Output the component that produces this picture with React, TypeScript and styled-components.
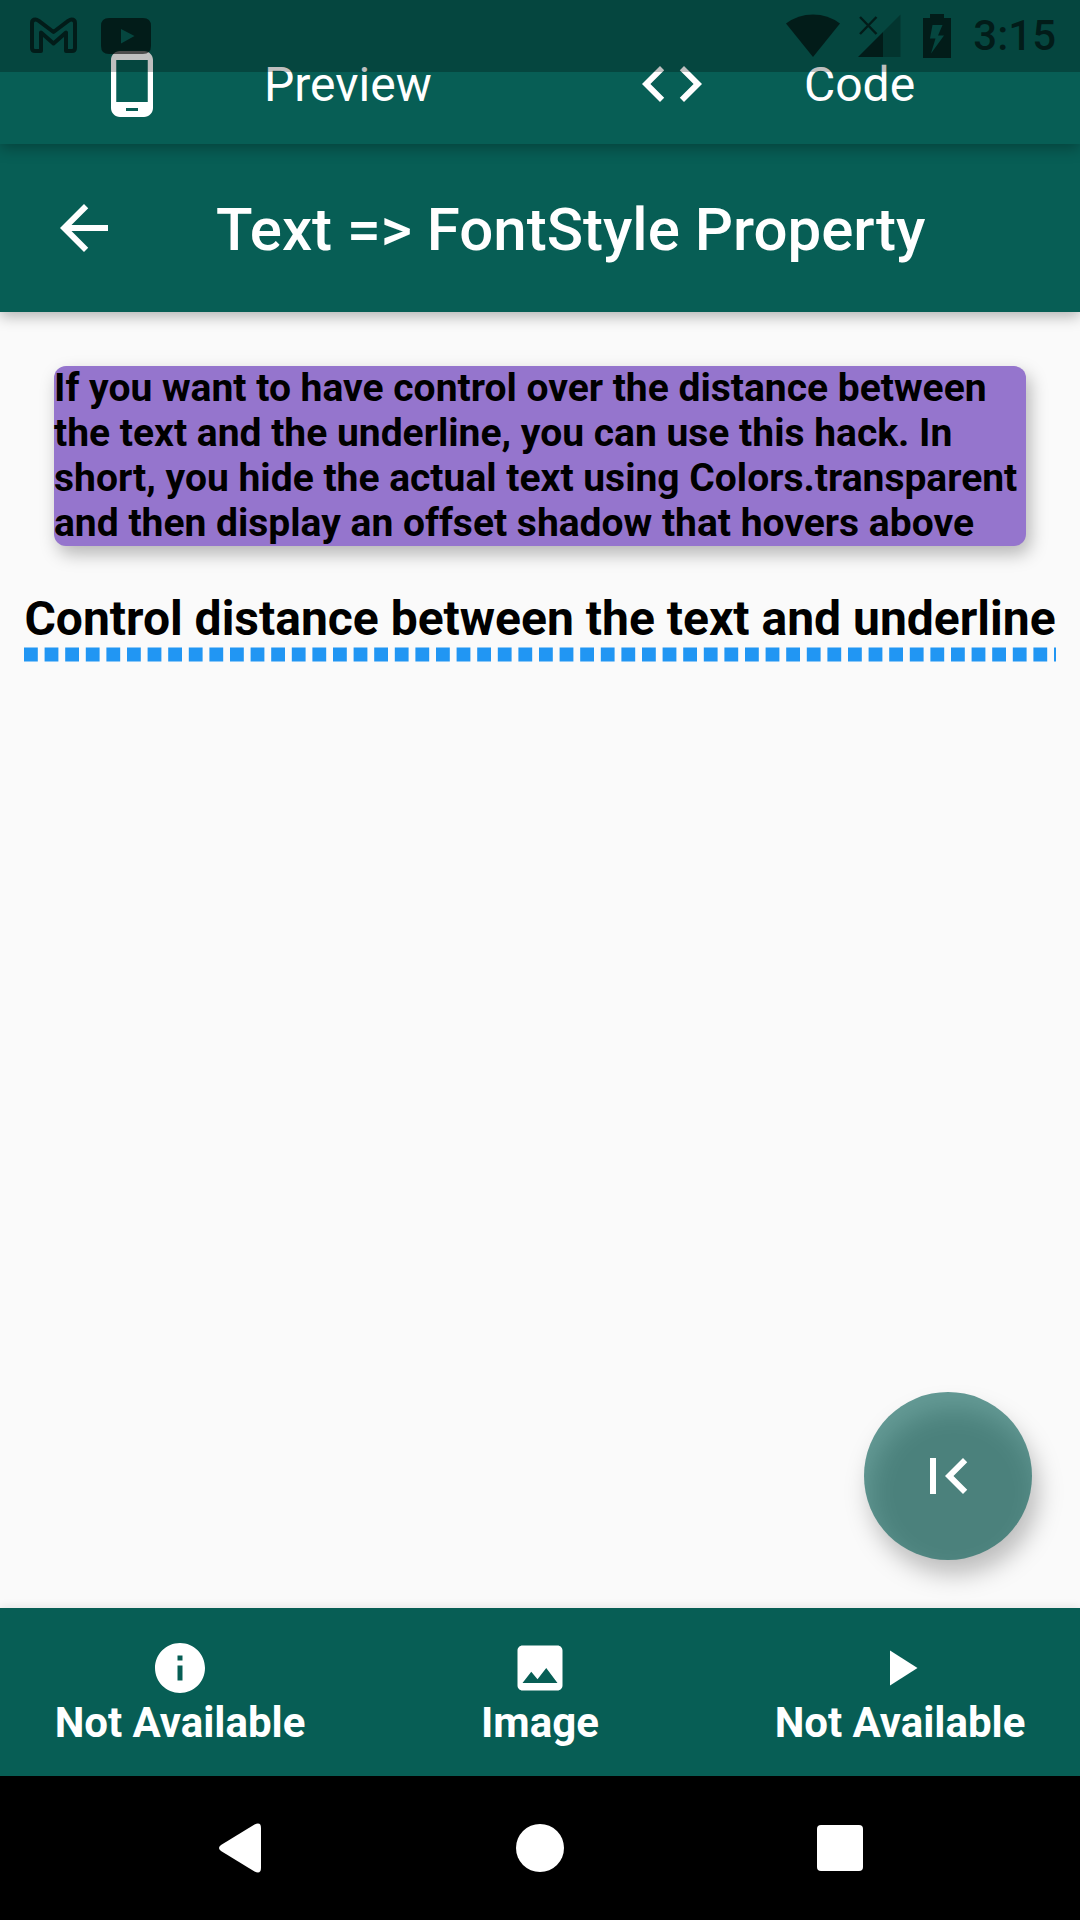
import React from "react";
import styled, { createGlobalStyle } from "styled-components";

const teal = "#075e55";
const ink = "rgba(0, 0, 0, 0.6)";

const GlobalStyle = createGlobalStyle`
  *, *::before, *::after { box-sizing: border-box; }
  body {
    margin: 0;
    background: #fafafa;
    font-family: Roboto, "Noto Sans", sans-serif;
  }
  button {
    margin: 0;
    padding: 0;
    border: 0;
    background: none;
    color: inherit;
    font: inherit;
    cursor: pointer;
  }
  h1, h2, p { margin: 0; }
  svg { display: block; flex: none; }
`;

const Screen = styled.div`
  position: relative;
  display: flex;
  flex-direction: column;
  min-height: 100vh;
`;

const StatusBar = styled.div`
  position: absolute;
  top: 0;
  left: 0;
  right: 0;
  z-index: 3;
  display: flex;
  justify-content: space-between;
  height: 72px;
  padding: 0 24px 0 30px;
  background: rgba(0, 0, 0, 0.25);
  color: ${ink};
  pointer-events: none;
`;

const StatusGroup = styled.div<{ $gap: number }>`
  display: flex;
  align-items: center;
  gap: ${(p) => p.$gap}px;
`;

const Clock = styled.time`
  font-size: 42px;
  font-weight: 500;
  line-height: 76px;
`;

const ViewTabs = styled.nav`
  position: relative;
  z-index: 2;
  display: flex;
  padding-top: 24px;
  background: ${teal};
  box-shadow: 0 4px 14px rgba(0, 0, 0, 0.3);
`;

const ViewTab = styled.button`
  display: flex;
  flex: 1;
  align-items: flex-start;
  gap: 96px;
  height: 120px;
  padding: 24px 96px;
  color: #fff;
  font-size: 48px;
  line-height: 74px;
`;

const AppBar = styled.header`
  position: relative;
  z-index: 1;
  display: flex;
  align-items: flex-start;
  gap: 96px;
  height: 168px;
  padding: 48px;
  background: ${teal};
  color: #fff;
  box-shadow: 0 4px 14px rgba(0, 0, 0, 0.3);
`;

const Title = styled.h1`
  font-size: 60px;
  font-weight: 500;
  line-height: 76px;
  white-space: nowrap;
`;

const Content = styled.main`
  position: relative;
  flex: 1;
  padding: 54px 24px;
  color: #000;
`;

const NoteCard = styled.p`
  margin: 0 30px 45px;
  border-radius: 12px;
  background: #9575cd;
  box-shadow: 4px 8px 18px rgba(0, 0, 0, 0.28);
  font-size: 39px;
  font-weight: 700;
  line-height: 45px;
`;

const Sample = styled.h2`
  font-size: 48px;
  font-weight: 700;
  line-height: 56px;
  text-align: center;
  white-space: nowrap;
`;

const FloatingButton = styled.button`
  position: absolute;
  right: 48px;
  bottom: 48px;
  z-index: 0;
  display: flex;
  align-items: center;
  justify-content: center;
  width: 168px;
  height: 168px;
  color: #fff;

  &::before,
  &::after {
    content: "";
    position: absolute;
    inset: 0;
    z-index: -1;
    border-radius: 50%;
  }

  /* The disc is translucent, so its shadow shows through it. */
  &::before {
    inset: 18px -6px -14px 6px;
    background: rgba(0, 0, 0, 0.25);
    filter: blur(12px);
  }

  &::after {
    background: rgba(7, 94, 85, 0.62);
  }
`;

const BottomBar = styled.nav`
  position: relative;
  display: flex;
  height: 168px;
  background: ${teal};
  box-shadow: 0 -2px 8px rgba(0, 0, 0, 0.08);
`;

const BottomItem = styled.button`
  display: flex;
  flex: 1;
  flex-direction: column;
  align-items: center;
  justify-content: center;
  color: #fff;
  font-size: 42px;
  font-weight: 700;
  line-height: 49px;
`;

const SystemBar = styled.nav`
  position: relative;
  display: flex;
  height: 144px;
  padding: 0 90px;
  background: #000;
`;

const SystemKey = styled.button`
  display: flex;
  flex: 1;
  align-items: center;
  justify-content: center;
  color: #fff;
`;

function Icon({ d, size }: { d: string; size: number }) {
  return (
    <svg width={size} height={size} viewBox="0 0 24 24" fill="currentColor" aria-hidden="true">
      <path d={d} />
    </svg>
  );
}

const icons = {
  phone:
    "M16 1H8C6.34 1 5 2.34 5 4v16c0 1.66 1.34 3 3 3h8c1.66 0 3-1.34 3-3V4c0-1.66-1.34-3-3-3zm-2 20h-4v-1h4v1zm3.25-3H6.75V4h10.5v14z",
  code: "M9.4 16.6L4.8 12l4.6-4.6L8 6l-6 6 6 6 1.4-1.4zm5.2 0l4.6-4.6-4.6-4.6L16 6l6 6-6 6-1.4-1.4z",
  back: "M20 11H7.83l5.59-5.59L12 4l-8 8 8 8 1.41-1.41L7.83 13H20v-2z",
  firstPage: "M18.41 16.59L13.82 12l4.59-4.59L17 6l-6 6 6 6zM6 6h2v12H6z",
  info: "M12 2C6.48 2 2 6.48 2 12s4.48 10 10 10 10-4.48 10-10S17.52 2 12 2zm1 15h-2v-6h2v6zm0-8h-2V7h2v2z",
  image:
    "M21 19V5c0-1.1-.9-2-2-2H5c-1.1 0-2 .9-2 2v14c0 1.1.9 2 2 2h14c1.1 0 2-.9 2-2zM8.5 13.5l2.5 3.01L14.5 12l4.5 6H5l3.5-4.5z",
  play: "M8 5v14l11-7z",
};

const bottomItems = [
  { key: "info", label: "Not Available", icon: icons.info },
  { key: "image", label: "Image", icon: icons.image },
  { key: "play", label: "Not Available", icon: icons.play },
];

function StatusIcons() {
  return (
    <StatusBar>
      <StatusGroup $gap={24}>
        <svg width="47" height="38" viewBox="0 0 47 38" fill="none" stroke="currentColor" strokeWidth="4" strokeLinejoin="round">
          <path d="M2 6v25q0 3 3 3H11V15.500l12.500 11L36 15.500V34h6q3 0 3-3V6q0-3.500-3.500-3.500-1.500 0-3 1.200L23.500 15 8.500 3.700Q7 2.500 5.500 2.500 2 2.500 2 6z" />
        </svg>
        <svg width="50" height="36" viewBox="0 0 50 36" fill="currentColor">
          <path fillRule="evenodd" d="M8 0h34q8 0 8 8v20q0 8-8 8H8q-8 0-8-8V8q0-8 8-8zM20 11v14.500L33.500 18z" />
        </svg>
      </StatusGroup>
      <StatusGroup $gap={22}>
        <StatusGroup $gap={18}>
          <svg width="54" height="44" viewBox="0 0 54 44" fill="currentColor">
            <path d="M27 43L0 9.500Q12 .5 27 .500T54 9.500z" />
          </svg>
          <svg width="43" height="44" viewBox="0 0 43 44" fill="currentColor">
            <path d="M0 43L25 18v25z" />
            <path d="M25 18L42.500 .500v42.500H25z" opacity=".4" />
            <path d="M2 3l16.500 17M18.500 3L2 20" stroke="currentColor" strokeWidth="2.500" />
          </svg>
        </StatusGroup>
        <svg width="28" height="44" viewBox="0 0 28 44" fill="currentColor">
          <path fillRule="evenodd" d="M7 0h14v4h7v40H0V4h7zM9.500 11L7 24.500h5.500L8 39.500l13-18h-6L19.500 11z" />
        </svg>
        <Clock>3:15</Clock>
      </StatusGroup>
    </StatusBar>
  );
}

export default function App() {
  return (
    <>
      <GlobalStyle />
      <Screen>
        <StatusIcons />
        <ViewTabs>
          <ViewTab type="button">
            <Icon d={icons.phone} size={72} />
            Preview
          </ViewTab>
          <ViewTab type="button">
            <Icon d={icons.code} size={72} />
            Code
          </ViewTab>
        </ViewTabs>
        <AppBar>
          <button type="button" aria-label="Back">
            <Icon d={icons.back} size={72} />
          </button>
          <Title>Text =&gt; FontStyle Property</Title>
        </AppBar>
        <Content>
          <NoteCard>
            If you want to have control over the distance between the text and the underline, you can
            use this hack. In short, you hide the actual text using Colors.transparent and then
            display an offset shadow that hovers above
          </NoteCard>
          <Sample>Control distance between the text and underline</Sample>
          <svg width="100%" height="15" aria-hidden="true">
            <line x1="0" y1="7.5" x2="100%" y2="7.5" stroke="#2196f3" strokeWidth="14" strokeDasharray="13.8 6.8" />
          </svg>
          <FloatingButton type="button" aria-label="First page">
            <Icon d={icons.firstPage} size={72} />
          </FloatingButton>
        </Content>
        <BottomBar>
          {bottomItems.map((item) => (
            <BottomItem key={item.key} type="button">
              <Icon d={item.icon} size={60} />
              {item.label}
            </BottomItem>
          ))}
        </BottomBar>
        <SystemBar>
          <SystemKey type="button" aria-label="System back">
            <svg width="42" height="50" viewBox="0 0 42 50" fill="currentColor">
              <path d="M2 22L35.500 1.500Q42-1.500 42 5v40q0 6.500-6.500 3.500L2 28q-4-3 0-6z" />
            </svg>
          </SystemKey>
          <SystemKey type="button" aria-label="Home">
            <svg width="48" height="48" viewBox="0 0 48 48" fill="currentColor">
              <circle cx="24" cy="24" r="24" />
            </svg>
          </SystemKey>
          <SystemKey type="button" aria-label="Recent apps">
            <svg width="46" height="46" viewBox="0 0 46 46" fill="currentColor">
              <rect width="46" height="46" rx="4" />
            </svg>
          </SystemKey>
        </SystemBar>
      </Screen>
    </>
  );
}
